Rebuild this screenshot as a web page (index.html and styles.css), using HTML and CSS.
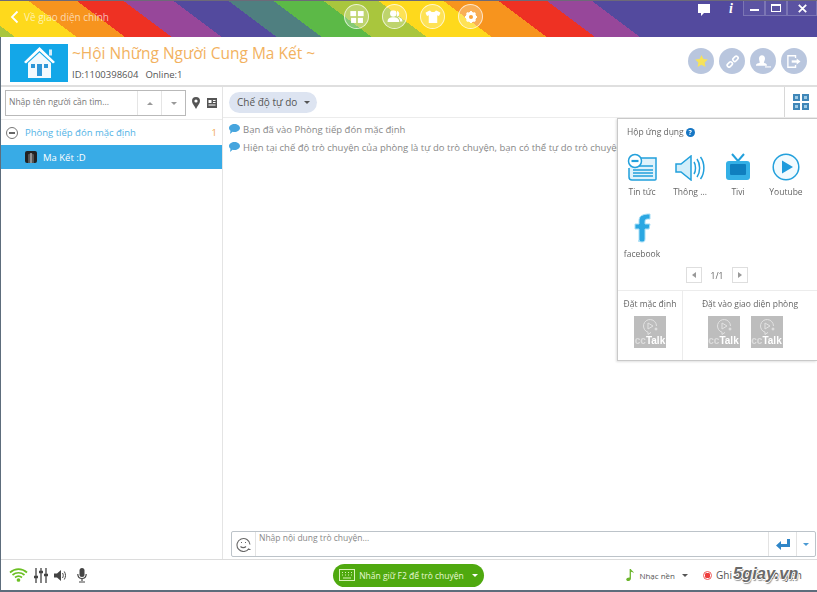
FILE: index.html
```html
<!DOCTYPE html>
<html lang="en">
<head>
  <meta charset="UTF-8">
  <meta name="viewport" content="width=device-width, initial-scale=1.0">
  <title>Phòng</title>
  <link rel="stylesheet" href="styles.css">
</head>
<body>

  <div class="window">
    <!-- rainbow top bar -->
    <div class="topbar">
      <div class="back">
        <svg width="9" height="14" viewBox="0 0 9 14"><path d="M7.5 1.5 2 7l5.500 5.500" fill="none" stroke="#fff" stroke-width="1.800"/></svg>
        <span>Về giao diện chính</span>
      </div>
      <div class="top-tools">
        <div class="round-tool">
          <svg width="16" height="14" viewBox="0 0 16 14" fill="#fff"><rect x="0" y="0" width="7" height="6"/><rect x="9" y="0" width="7" height="6"/><rect x="1" y="8" width="6" height="6"/><rect x="9" y="8" width="6" height="6"/></svg>
        </div>
        <div class="round-tool">
          <svg width="18" height="15" viewBox="0 0 18 15" fill="#fff"><circle cx="7" cy="4" r="3.800"/><path d="M0 14c0-4 3-5.500 7-5.500s7 1.500 7 5.500z"/><path d="M11.500.6a3.800 3.800 0 0 1 0 7.200c3.500.5 6.500 2 6.500 5.700h-3c0-3-1.500-5-4-6z"/></svg>
        </div>
        <div class="round-tool">
          <svg width="18" height="15" viewBox="0 0 18 15" fill="#fff"><path d="M5.500 0 0 3l2 4 2-1v9h10V6l2 1 2-4-5.500-3c-.5 1.500-2 2.200-3.500 2.200S6 1.500 5.500 0z"/></svg>
        </div>
        <div class="round-tool">
          <svg width="16" height="16" viewBox="0 0 16 16"><circle cx="8" cy="8" r="4.500" fill="none" stroke="#fff" stroke-width="3.500"/><path d="M8 1v14M1 8h14M3 3l10 10M13 3 3 13" stroke="#fff" stroke-width="2.200"/><circle cx="8" cy="8" r="2.400" fill="#f9a43a"/></svg>
        </div>
      </div>
      <div class="win-tools">
        <svg class="win-icon" width="12" height="12" viewBox="0 0 12 12" fill="#fff"><path d="M0 0h12v9H6l-3 3V9H0z"/></svg>
        <span class="win-info">i</span>
        <div class="win-btns">
          <div class="win-btn"><span class="min-mark"></span></div>
          <div class="win-btn"><span class="max-mark"></span></div>
          <div class="win-btn win-close">
            <svg width="9" height="9" viewBox="0 0 9 9"><path d="M.8.8l7.400 7.400M8.200.8.800 8.200" stroke="#fff" stroke-width="1.800"/></svg>
          </div>
        </div>
      </div>
    </div>

    <!-- room title -->
    <div class="room-head">
      <div class="room-logo">
        <svg width="33" height="34" viewBox="0 0 33 34">
          <path d="M1 16 16.500 1 32 16l-2 1.500L16.500 5 3 17.500z" fill="#fff"/>
          <rect x="26" y="3.500" width="3" height="6" fill="#d5ecf8"/>
          <path d="M5 17 16.500 6.500 28 17v15H5z" fill="#f3fafe"/>
          <rect x="8" y="18" width="4" height="4" fill="#2f97d8"/>
          <rect x="21" y="18" width="4" height="4" fill="#2f97d8"/>
          <rect x="14" y="18" width="5" height="12" fill="#2f97d8"/>
        </svg>
      </div>
      <div class="room-text">
        <div class="room-name">~Hội Những Người Cung Ma Kết ~</div>
        <div class="room-meta"><span>ID:1100398604</span><span>Online:1</span></div>
      </div>
      <div class="room-actions">
        <div class="action-btn">
          <svg width="13" height="12" viewBox="0 0 16 15"><path d="m8 0 2.400 5 5.600.7-4.100 3.700 1.100 5.600L8 12.200 3 15l1.100-5.600L0 5.700 5.600 5z" fill="#f6e25a"/></svg>
        </div>
        <div class="action-btn">
          <svg width="13" height="13" viewBox="0 0 16 16" fill="none" stroke="#fff" stroke-width="2"><rect x="-3.500" y="-2" width="7" height="4.500" rx="2" transform="translate(4.500 11.500) rotate(-45)"/><rect x="-3.500" y="-2" width="7" height="4.500" rx="2" transform="translate(11.500 4.500) rotate(-45)"/></svg>
        </div>
        <div class="action-btn">
          <svg width="15" height="13" viewBox="0 0 20 17" fill="#fff"><path d="M8 0c2.500 0 4 2 4 4.500S10.800 8.500 10.500 10c2 .7 4 1.300 4 3v1H0v-1c0-1.700 2.500-2.300 5-3C5 8.500 4 7 4 4.500S5.500 0 8 0z"/><path d="M12 15h8v1.500h-8z"/></svg>
        </div>
        <div class="action-btn">
          <svg width="14" height="13" viewBox="0 0 18 17" fill="none" stroke="#fff" stroke-width="1.800"><path d="M11 4V1H1v15h10v-3"/><path d="M6 8.500h7" stroke-width="3"/><path d="m12.500 4.500 5 4-5 4z" fill="#fff" stroke="none"/></svg>
        </div>
      </div>
    </div>

    <div class="main">
      <!-- member list -->
      <div class="side">
        <div class="search-row">
          <div class="search-box">
            <span class="search-text">Nhập tên người cần tìm...</span>
            <span class="search-arrow"><i class="tri-up"></i></span>
            <span class="search-arrow"><i class="tri-down"></i></span>
          </div>
          <svg class="pin" width="8" height="12" viewBox="0 0 8 12"><path d="M4 0a4 4 0 0 1 4 4c0 2.500-2.500 5-4 8-1.500-3-4-5.500-4-8a4 4 0 0 1 4-4z" fill="#555"/><circle cx="4" cy="4" r="1.600" fill="#fff"/></svg>
          <svg class="card" width="10" height="10" viewBox="0 0 10 10"><rect width="10" height="10" fill="#555"/><path d="M1.500 2h3v3h-3zM6 2h2.500v1H6zM6 4h2.500v1H6zM1.500 6.500h7v1h-7z" fill="#fff"/></svg>
        </div>
        <div class="group">
          <span class="group-toggle"></span>
          <span class="group-name">Phòng tiếp đón mặc định</span>
          <span class="group-count">1</span>
        </div>
        <div class="member">
          <svg width="12" height="12" viewBox="0 0 12 12"><rect width="12" height="12" rx="2" fill="#222"/><path d="M3 3.500 6 2l3 1.500V12H3z" fill="#555"/><path d="M6 2v10" stroke="#eee" stroke-width=".8"/></svg>
          <span>Ma Kết :D</span>
        </div>
      </div>

      <!-- chat -->
      <div class="chat">
        <div class="mode-row">
          <div class="mode-btn">Chế độ tự do <i class="tri-down tri-dark"></i></div>
          <div class="apps-toggle">
            <div class="apps-grid"><i></i><i></i><i></i><i></i></div>
          </div>
        </div>
        <div class="messages">
          <div class="msg"><svg class="bubble" width="11" height="10" viewBox="0 0 11 10"><path d="M5.500 0C8.500 0 11 1.700 11 4S8.500 8 5.500 8c-.7 0-1.300-.1-1.900-.2L1 10l.5-3.200C.5 6 0 5 0 4c0-2.300 2.500-4 5.500-4z" fill="#46a5de"/></svg>Bạn đã vào Phòng tiếp đón mặc định</div>
          <div class="msg"><svg class="bubble" width="11" height="10" viewBox="0 0 11 10"><path d="M5.500 0C8.500 0 11 1.700 11 4S8.500 8 5.500 8c-.7 0-1.300-.1-1.900-.2L1 10l.5-3.200C.5 6 0 5 0 4c0-2.300 2.500-4 5.500-4z" fill="#46a5de"/></svg>Hiện tại chế độ trò chuyện của phòng là tự do trò chuyện, bạn có thể tự do trò chuyện</div>
        </div>
        <div class="input-bar">
          <div class="smile">
            <svg width="15" height="15" viewBox="0 0 15 15" fill="none" stroke="#666" stroke-width="1.100"><path d="M13 11.500A6.500 6.500 0 1 1 14 7.500"/><path d="M4.500 9.500c1.500 1.500 4 1.500 5.500 0M12 12.500h2.500"/><path d="M5 5.500h1M9 5.500h1"/></svg>
          </div>
          <div class="input-text">Nhập nội dung trò chuyện...</div>
          <div class="send">
            <svg width="14" height="11" viewBox="0 0 14 11" fill="#2f86c8"><path d="M11 0h3v8H5v3L0 6.500 5 2v3h6z"/></svg>
          </div>
          <div class="send-more"><i class="tri-down tri-blue"></i></div>
        </div>
      </div>

      <!-- app box popup -->
      <div class="app-box">
        <div class="box-title">Hộp ứng dụng <span class="help">?</span></div>
        <div class="app-list">
          <div class="app">
            <svg width="30" height="28" viewBox="0 0 30 28" fill="none" stroke="#22a0dc" stroke-width="1.500"><path d="M9 5h20v21a1 1 0 0 1-1 1H5a3 3 0 0 1-3-3v-9" fill="#dff2fb"/><path d="M11 13h15M6 17h20M6 20h20M6 23h20"/><circle cx="8" cy="8" r="6.500" fill="#fff"/><path d="M4.500 8h7" stroke-width="2.200"/></svg>
            <span>Tin tức</span>
          </div>
          <div class="app">
            <svg width="30" height="26" viewBox="0 0 30 26" fill="none" stroke="#22a0dc" stroke-width="1.500"><path d="M1 9h5l10-8v24L6 17H1z" fill="#d3eefa"/><path d="M19 7c2 3 2 9 0 12M22 4c3.500 5 3.500 13 0 18M25.500 2c4.500 6 4.500 16 0 22"/></svg>
            <span>Thông ...</span>
          </div>
          <div class="app">
            <svg width="26" height="28" viewBox="0 0 26 28"><path d="M7 1l6 7 6-7" fill="none" stroke="#22a0dc" stroke-width="2"/><rect x="1" y="8" width="24" height="19" rx="3" fill="#34b0e6"/><rect x="5" y="11" width="16" height="11" rx="1" fill="#0f7fbf"/></svg>
            <span>Tivi</span>
          </div>
          <div class="app">
            <svg width="28" height="28" viewBox="0 0 28 28"><circle cx="14" cy="14" r="12.800" fill="#f1fafe" stroke="#22a0dc" stroke-width="1.500"/><path d="M10 7.500 21 14l-11 6.500z" fill="#1e9bdc"/></svg>
            <span>Youtube</span>
          </div>
          <div class="app">
            <svg width="18" height="30" viewBox="0 0 18 30"><path d="M6 29V16H2v-5h4V8c0-5 3-7 11-7v5c-4 0-5 0-5 3v2h5l-1 5h-4v10c0 2-1 3-3 3s-3-1-3-2z" fill="#2aa7e2" stroke="#a6def6"/></svg>
            <span>facebook</span>
          </div>
        </div>
        <div class="pager">
          <span class="page-btn"><i class="tri-left"></i></span>
          <span>1/1</span>
          <span class="page-btn"><i class="tri-right"></i></span>
        </div>
        <div class="box-foot">
          <div class="foot-left">
            <div class="foot-label">Đặt mặc định</div>
            <div class="tiles">
              <div class="tile">
                <svg width="16" height="16" viewBox="0 0 16 16" fill="none" stroke="#e2e2e2"><path d="M14.500 7A6.500 6.500 0 1 0 6 13.200L6 15.500 9 13.400"/><path d="m6 4 5 3-5 3z"/><circle cx="14" cy="10" r="1" fill="#e2e2e2"/></svg>
                <span class="tile-text"><em>cc</em>Talk</span>
              </div>
            </div>
          </div>
          <div class="foot-right">
            <div class="foot-label">Đặt vào giao diện phòng</div>
            <div class="tiles tiles-room">
              <div class="tile">
                <svg width="16" height="16" viewBox="0 0 16 16" fill="none" stroke="#e2e2e2"><path d="M14.500 7A6.500 6.500 0 1 0 6 13.200L6 15.500 9 13.400"/><path d="m6 4 5 3-5 3z"/><circle cx="14" cy="10" r="1" fill="#e2e2e2"/></svg>
                <span class="tile-text"><em>cc</em>Talk</span>
              </div>
              <div class="tile">
                <svg width="16" height="16" viewBox="0 0 16 16" fill="none" stroke="#e2e2e2"><path d="M14.500 7A6.500 6.500 0 1 0 6 13.200L6 15.500 9 13.400"/><path d="m6 4 5 3-5 3z"/><circle cx="14" cy="10" r="1" fill="#e2e2e2"/></svg>
                <span class="tile-text"><em>cc</em>Talk</span>
              </div>
            </div>
          </div>
        </div>
      </div>
    </div>

    <!-- bottom bar -->
    <div class="footer">
      <div class="foot-tools">
        <svg width="19" height="14" viewBox="0 0 19 14" fill="none" stroke="#6cc024" stroke-width="1.700"><path d="M1 4.500c5-4.500 12-4.500 17 0M3.500 7c3.500-3 8.500-3 12 0M6 9.500c2-1.500 5-1.500 7 0"/><circle cx="9.500" cy="12" r="1" fill="#6cc024"/></svg>
        <svg width="14" height="15" viewBox="0 0 14 15" stroke="#444" stroke-width="1.300"><path d="M2 0v15M7 0v15M12 0v15" fill="none"/><path d="M0 9h4M5 4h4M10 7h4" stroke-width="2.500"/></svg>
        <svg width="12" height="11" viewBox="0 0 12 11"><path d="M0 3.500h3L7 0v11L3 7.500H0z" fill="#444"/><path d="M8.500 3c1 1.500 1 3.500 0 5M10.300 1.500c1.600 2.500 1.600 5.500 0 8" fill="none" stroke="#444"/></svg>
        <svg class="mic" width="10" height="15" viewBox="0 0 10 15"><rect x="2.500" y="0" width="5" height="9" rx="2.500" fill="#444"/><path d="M.8 6c0 3 1.800 4.500 4.200 4.500S9.200 9 9.200 6M5 10.500V13M2 14h6" fill="none" stroke="#444" stroke-width="1.200"/></svg>
      </div>
      <div class="talk-btn">
        <svg width="16" height="12" viewBox="0 0 16 12" fill="none" stroke="#d9f2b8"><rect x=".5" y=".5" width="15" height="11"/><path d="M3 3.500h1M6 3.500h1M9 3.500h1M12 3.500h1M3 6h1M6 6h1M9 6h1M12 6h1M4 9h8"/></svg>
        <span>Nhấn giữ F2 để trò chuyện</span>
        <i class="tri-down tri-white"></i>
      </div>
      <div class="foot-right-tools">
        <div class="music">
          <svg width="9" height="12" viewBox="0 0 10 14"><path d="M4 0h1.500c.3 2 3.500 2.500 3.500 5-1-1.300-2-1.500-3.500-1.800V11c0 1.800-1.500 3-3.300 3C.8 14 0 13.200 0 12.200 0 10.800 2 9.800 4 10z" fill="#6cb52d"/></svg>
          <span>Nhạc nền</span>
          <i class="tri-down tri-dark"></i>
        </div>
        <div class="record">
          <span class="rec-dot"></span>
          <span>Ghi âm trò chuyện</span>
        </div>
      </div>
      <div class="watermark">5giay.vn</div>
    </div>
  </div>

</body>
</html>
```

FILE: styles.css
```css
* {
  margin: 0;
  padding: 0;
  box-sizing: border-box;
  font-family: "Open Sans", "Noto Sans", sans-serif;
}

body {
  width: 817px;
  height: 592px;
  overflow: hidden;
  background: #fff;
}

i {
  display: inline-block;
}

.window {
  width: 817px;
  height: 592px;
  display: flex;
  flex-direction: column;
  background: #fff;
  border-left: 1px solid #5d6d7c;
  border-bottom: 2px solid #5d6d7c;
  filter: blur(0.35px);
}

/* little triangles */
.tri-up, .tri-down {
  width: 0;
  height: 0;
  border-left: 3px solid transparent;
  border-right: 3px solid transparent;
}
.tri-up { border-bottom: 3px solid #999; }
.tri-down { border-top: 3px solid #999; }
.tri-dark { border-top-color: #555; }
.tri-blue { border-top-color: #4a9ad4; }
.tri-white { border-top-color: #fff; }
.tri-left, .tri-right {
  width: 0;
  height: 0;
  border-top: 3px solid transparent;
  border-bottom: 3px solid transparent;
}
.tri-left { border-right: 4px solid #999; }
.tri-right { border-left: 4px solid #999; }

/* top bar */
.topbar {
  height: 37px;
  flex-shrink: 0;
  margin-left: -1px;
  display: flex;
  align-items: flex-start;
  position: relative;
  border-top: 1px solid #6d6a78;
  background: linear-gradient(36.87deg,
    #a9c63d 9px, #fed91c 9px 46px,
    #f7941e 46px 75px, #ee3123 75px 103px,
    #97479a 103px 133px, #534a9e 133px 166px,
    #4f7f80 166px 193px, #5cb947 193px 223px,
    #a9c63d 223px 256px, #fed91c 256px 295px,
    #f7941e 295px 328px, #ee3123 328px 357px,
    #97479a 357px 384px, #534a9e 384px);
}

.back {
  display: flex;
  align-items: center;
  gap: 5px;
  padding: 9px 0 0 10px;
  color: rgba(255, 255, 255, 0.65);
  font-size: 10px;
}

.top-tools {
  position: absolute;
  left: 344px;
  top: 3px;
  display: flex;
  gap: 13px;
}

.round-tool {
  width: 25px;
  height: 25px;
  border-radius: 50%;
  border: 1px solid rgba(255, 255, 255, 0.7);
  background: rgba(255, 255, 255, 0.25);
  display: flex;
  align-items: center;
  justify-content: center;
}
.round-tool svg {
  transform: scale(0.85);
}

.win-tools {
  margin-left: auto;
  display: flex;
  align-items: flex-start;
}

.win-icon {
  margin: 3px 19px 0 0;
}

.win-info {
  color: #fff;
  font-family: "Liberation Serif", serif;
  font-style: italic;
  font-weight: bold;
  font-size: 14px;
  line-height: 16px;
  margin-right: 10px;
}

.win-btns {
  display: flex;
}

.win-btn {
  width: 22px;
  height: 15px;
  background: rgba(255, 255, 255, 0.05);
  border: 1px solid rgba(255, 255, 255, 0.2);
  border-top: none;
  display: flex;
  align-items: center;
  justify-content: center;
}
.win-close {
  width: 30px;
}

.min-mark {
  width: 9px;
  height: 2px;
  margin-top: 4px;
  background: #fff;
}

.max-mark {
  width: 10px;
  height: 8px;
  border: 1px solid #fff;
  border-top-width: 2px;
}

/* room title */
.room-head {
  height: 50px;
  flex-shrink: 0;
  display: flex;
  align-items: flex-start;
  padding: 7px 10px 0 9px;
  border-bottom: 2px solid #dfdfdf;
}

.room-logo {
  width: 58px;
  height: 38px;
  background: #13a7e8;
  display: flex;
  align-items: center;
  justify-content: center;
}

.room-text {
  margin-left: 4px;
}

.room-name {
  color: #f2b25f;
  font-size: 15.500px;
  line-height: 19px;
  white-space: nowrap;
}

.room-meta {
  display: flex;
  gap: 7px;
  margin-top: 5px;
  color: #555;
  font-size: 9.500px;
  line-height: 13px;
}

.room-actions {
  margin-left: auto;
  display: flex;
  gap: 5px;
  padding-top: 4px;
}

.action-btn {
  width: 26px;
  height: 26px;
  border-radius: 50%;
  background: #b9c6de;
  display: flex;
  align-items: center;
  justify-content: center;
}

/* main area */
.main {
  flex: 1;
  min-height: 0;
  display: flex;
  position: relative;
}

.side {
  width: 222px;
  flex-shrink: 0;
  border-right: 1px solid #e4e4e4;
}

.search-row {
  height: 33px;
  display: flex;
  align-items: center;
  padding: 0 0 0 4px;
  border-bottom: 1px solid #ececec;
}

.search-box {
  width: 181px;
  height: 26px;
  display: flex;
  align-items: stretch;
  border: 1px solid #b9b9b9;
  color: #777;
  font-size: 8.500px;
}

.search-text {
  flex: 1;
  padding-left: 3px;
  line-height: 22px;
  white-space: nowrap;
  overflow: hidden;
}

.search-arrow {
  width: 24px;
  display: flex;
  align-items: center;
  justify-content: center;
  border-left: 1px solid #e5e5e5;
}

.pin {
  margin-left: 6px;
}

.card {
  margin-left: 7px;
}

.group {
  height: 25px;
  display: flex;
  align-items: center;
  padding: 0 5px 0 5px;
  font-size: 9.500px;
}

.group-toggle {
  width: 12px;
  height: 12px;
  border: 1px solid #777;
  border-radius: 50%;
  position: relative;
  margin-right: 7px;
}
.group-toggle::after {
  content: "";
  position: absolute;
  left: 2px;
  top: 4px;
  width: 6px;
  height: 2px;
  background: #666;
}

.group-name {
  color: #52b3e6;
}

.group-count {
  margin-left: auto;
  color: #f2a74e;
}

.member {
  height: 24px;
  display: flex;
  align-items: center;
  gap: 6px;
  padding-left: 24px;
  background: #38abe6;
  color: #fff;
  font-size: 9.500px;
}

.chat {
  flex: 1;
  min-width: 0;
  display: flex;
  flex-direction: column;
}

.mode-row {
  height: 31px;
  flex-shrink: 0;
  display: flex;
  align-items: center;
  padding-left: 6px;
  border-bottom: 1px solid #ececec;
}

.mode-btn {
  height: 21px;
  padding: 0 7px 0 8px;
  display: flex;
  align-items: center;
  gap: 7px;
  border-radius: 11px;
  background: #dde4f1;
  color: #555;
  font-size: 10px;
}

.apps-toggle {
  margin-left: auto;
  width: 33px;
  height: 100%;
  display: flex;
  align-items: center;
  justify-content: center;
  border-left: 1px solid #d8d8d8;
}

.apps-grid {
  display: grid;
  grid-template-columns: 7px 7px;
  gap: 2px;
}
.apps-grid i {
  height: 7px;
  background: #3f86b8;
  border: 2px solid #3f86b8;
  background-clip: padding-box;
  background-color: #9fcbe6;
}

.messages {
  flex: 1;
  padding-top: 2px;
  overflow: hidden;
}

.msg {
  height: 18px;
  display: flex;
  align-items: center;
  padding-left: 6px;
  color: #888;
  font-size: 9.500px;
  white-space: nowrap;
}

.bubble {
  margin-right: 3px;
  flex-shrink: 0;
}

.input-bar {
  height: 26px;
  flex-shrink: 0;
  margin: 0 1px 2px 8px;
  display: flex;
  border: 1px solid #bcc3c9;
  border-radius: 2px;
}

.smile {
  width: 24px;
  display: flex;
  align-items: center;
  justify-content: center;
  border-right: 1px solid #e3e3e3;
}

.input-text {
  flex: 1;
  padding: 0 0 0 3px;
  color: #888;
  font-size: 8.500px;
  line-height: 12px;
}

.send {
  width: 28px;
  display: flex;
  align-items: center;
  justify-content: center;
  border-left: 1px solid #e3e3e3;
}

.send-more {
  width: 19px;
  display: flex;
  align-items: center;
  justify-content: center;
  border-left: 1px solid #e3e3e3;
}

/* app box popup */
.app-box {
  position: absolute;
  right: 0;
  top: 31px;
  width: 200px;
  height: 243px;
  background: #fff;
  border: 1px solid #c9c9c9;
  border-right: none;
  box-shadow: -1px 1px 2px rgba(0, 0, 0, 0.12);
  display: flex;
  flex-direction: column;
  color: #666;
  font-size: 8.500px;
}

.box-title {
  display: flex;
  align-items: center;
  gap: 2px;
  padding: 7px 0 0 9px;
  line-height: 12px;
}

.help {
  width: 9px;
  height: 9px;
  border-radius: 50%;
  background: #1676c4;
  color: #fff;
  font-size: 7px;
  font-weight: bold;
  line-height: 9px;
  text-align: center;
}

.app-list {
  display: grid;
  grid-template-columns: repeat(4, 48px);
  grid-auto-rows: 62px;
  padding: 5px 0 0 0;
}

.app {
  display: flex;
  flex-direction: column;
  align-items: center;
  justify-content: flex-end;
  gap: 5px;
  padding-bottom: 7px;
  line-height: 12px;
  white-space: nowrap;
}

.pager {
  display: flex;
  align-items: center;
  justify-content: center;
  gap: 9px;
  margin: -1px 0 0 -1px;
  height: 18px;
}

.page-btn {
  width: 16px;
  height: 16px;
  border: 1px solid #dedede;
  display: flex;
  align-items: center;
  justify-content: center;
}

.box-foot {
  margin-top: 6px;
  flex: 1;
  display: flex;
  border-top: 1px solid #ececec;
}

.foot-left {
  width: 65px;
  border-right: 1px solid #ececec;
}

.foot-right {
  flex: 1;
}

.foot-label {
  padding-top: 7px;
  line-height: 12px;
  text-align: center;
  white-space: nowrap;
}

.tiles {
  display: flex;
  justify-content: center;
  gap: 11px;
  margin-top: 6px;
}
.tiles-room {
  padding-right: 10px;
}

.tile {
  width: 32px;
  height: 32px;
  background: #bdbdbd;
  display: flex;
  flex-direction: column;
  align-items: center;
  padding-top: 3px;
}

.tile-text {
  color: #fff;
  font-family: "Liberation Sans", sans-serif;
  font-size: 10px;
  font-weight: bold;
  line-height: 11px;
}
.tile-text em {
  font-family: "Liberation Sans", sans-serif;
  font-style: normal;
  color: #dcdcdc;
}

/* bottom bar */
.footer {
  height: 31px;
  flex-shrink: 0;
  display: flex;
  align-items: center;
  position: relative;
  border-top: 1px solid #dcdcdc;
  font-size: 8.500px;
  color: #555;
}

.foot-tools {
  display: flex;
  align-items: center;
  gap: 6px;
  padding-left: 8px;
  width: 332px;
}

.mic {
  margin-left: 5px;
}

.talk-btn {
  width: 151px;
  height: 23px;
  display: flex;
  align-items: center;
  justify-content: center;
  gap: 4px;
  border-radius: 12px;
  background: #4fa90f;
  color: #e9f8d5;
  white-space: nowrap;
}
.talk-btn i {
  margin-left: 4px;
}

.foot-right-tools {
  margin-left: auto;
  display: flex;
  align-items: center;
  gap: 15px;
  padding-right: 15px;
  white-space: nowrap;
}

.music, .record {
  display: flex;
  align-items: center;
  gap: 4px;
}
.music {
  font-size: 8px;
}
.music i {
  margin-left: 3px;
}
.record {
  font-size: 10px;
}

.rec-dot {
  width: 9px;
  height: 9px;
  border-radius: 50%;
  border: 1px solid #ee5a5a;
  background: radial-gradient(#ee3c3c 55%, #fff 60%);
}

.watermark {
  position: absolute;
  left: 732px;
  top: 4px;
  font-family: "Liberation Sans", sans-serif;
  font-size: 16.500px;
  font-style: italic;
  font-weight: bold;
  color: #6a6a6a;
  text-shadow: 1px 0 #fff, -1px 0 #fff, 0 1px #fff, 0 -1px #fff, 1px 2px 1px rgba(0, 0, 0, 0.4);
}
```
